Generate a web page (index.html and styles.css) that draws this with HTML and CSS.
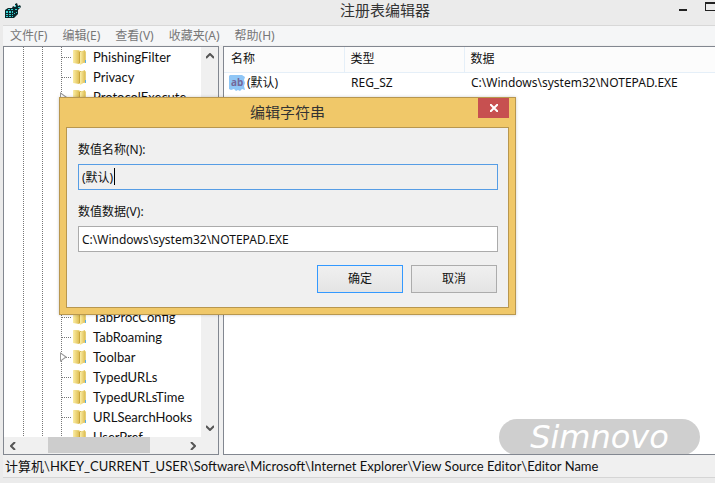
FILE: index.html
```html
<!DOCTYPE html>
<html lang="zh-CN">
<head>
<meta charset="UTF-8">
<title>注册表编辑器</title>
<link rel="stylesheet" href="styles.css">
</head>
<body>
<svg class="defs" aria-hidden="true">
  <defs>
    <linearGradient id="gold" x1="0" x2="1">
      <stop offset="0" stop-color="#fbeea6"/>
      <stop offset="1" stop-color="#dfbf55"/>
    </linearGradient>
    <symbol id="folder" viewBox="0 0 14 16">
      <path d="M1 1h5l1 1h5l1 1v11H1z" fill="#ecd987"/>
      <path d="M0 1l6 1v13l-6-1z" fill="url(#gold)"/>
      <path d="M6 3l2-1v11l-2 2z" fill="#c9a53c"/>
      <path d="M7 3l5-2v12l-5 3z" fill="url(#gold)"/>
      <path d="M12 2l1 1v11h-2l1-1z" fill="#e6cf78"/>
      <path d="M12 11h1v3h-1z" fill="#5aaee6"/>
    </symbol>
  </defs>
</svg>

<div class="window">
  <header class="titlebar">
    <svg class="app-icon" viewBox="0 0 16 16" aria-hidden="true">
      <path d="M0 7l3-2h4l1-2 2 1V1l2-1 1 3 2-1 1 2-2 2-1 1v4l-4 4H0z" fill="#08282b"/>
      <path d="M1 8h2v2H1zM4 8h2v2H4zM7 8h1v2H7zM1 11h2v1H1zM4 11h2v1H4zM7 11h1v1H7zM3 6h2v1H3zM6 6h2v1H6zM1 13h2v1H1zM4 13h2v1H4zM7 13h1v1H7zM10 2h1v2h-1zM13 4h2v1h-2zM10 6h2v1h-2zM9 10h1v1H9zM11 9h1v1h-1z" fill="#38d0d2"/>
    </svg>
    <h1>注册表编辑器</h1>
    <div class="window-controls">
      <button aria-label="最小化"><span class="min"></span></button>
      <button aria-label="最大化"><span class="max"></span></button>
    </div>
  </header>

  <nav class="menu">
    <button>文件(F)</button>
    <button>编辑(E)</button>
    <button>查看(V)</button>
    <button>收藏夹(A)</button>
    <button>帮助(H)</button>
  </nav>

  <main class="panes">
    <section class="tree-pane">
      <div class="tree-row">
        <ul class="tree">
          <li><svg><use href="#folder"/></svg>PhishingFilter</li>
          <li><svg><use href="#folder"/></svg>Privacy</li>
          <li class="closed"><svg><use href="#folder"/></svg>ProtocolExecute</li>
          <li><svg><use href="#folder"/></svg></li>
          <li><svg><use href="#folder"/></svg></li>
          <li><svg><use href="#folder"/></svg></li>
          <li><svg><use href="#folder"/></svg></li>
          <li><svg><use href="#folder"/></svg></li>
          <li><svg><use href="#folder"/></svg></li>
          <li><svg><use href="#folder"/></svg></li>
          <li><svg><use href="#folder"/></svg></li>
          <li><svg><use href="#folder"/></svg></li>
          <li><svg><use href="#folder"/></svg></li>
          <li><svg><use href="#folder"/></svg>TabProcConfig</li>
          <li><svg><use href="#folder"/></svg>TabRoaming</li>
          <li class="closed"><svg><use href="#folder"/></svg>Toolbar</li>
          <li><svg><use href="#folder"/></svg>TypedURLs</li>
          <li><svg><use href="#folder"/></svg>TypedURLsTime</li>
          <li><svg><use href="#folder"/></svg>URLSearchHooks</li>
          <li><svg><use href="#folder"/></svg>UserPref</li>
        </ul>
        <div class="vscroll">
          <button aria-label="向上"><svg viewBox="0 0 8 6"><path d="M0 5l4-4 4 4"/></svg></button>
          <button aria-label="向下"><svg viewBox="0 0 8 6"><path d="M0 1l4 4 4-4"/></svg></button>
        </div>
      </div>
      <div class="hscroll">
        <button aria-label="向左"><svg viewBox="0 0 6 8"><path d="M5 0L1 4l4 4"/></svg></button>
        <div class="track"><div class="thumb"></div></div>
        <button aria-label="向右"><svg viewBox="0 0 6 8"><path d="M1 0l4 4-4 4"/></svg></button>
      </div>
    </section>

    <section class="value-pane">
      <table class="values">
        <thead>
          <tr><th class="col-name">名称</th><th class="col-type">类型</th><th>数据</th></tr>
        </thead>
        <tbody>
          <tr>
            <td class="value-name">
              <svg viewBox="0 0 16 16" aria-hidden="true">
                <path d="M0 1l1-1h12l3 2-1 3 1 3-1 3 1 4-3-1-2 2-2-1-2 1-2-2-3 1-2-1z" fill="#8fc6f6"/>
                <text x="2" y="11">ab</text>
              </svg>(默认)
            </td>
            <td>REG_SZ</td>
            <td>C:\Windows\system32\NOTEPAD.EXE</td>
          </tr>
        </tbody>
      </table>
      <div class="watermark">Simnovo</div>
    </section>
  </main>

  <footer class="statusbar">计算机\HKEY_CURRENT_USER\Software\Microsoft\Internet Explorer\View Source Editor\Editor Name</footer>
</div>

<div class="dialog" role="dialog" aria-labelledby="dialog-title">
  <div class="dialog-title">
    <h2 id="dialog-title">编辑字符串</h2>
    <button class="close" aria-label="关闭"><svg viewBox="0 0 8 8"><path d="M0 0l8 8M8 0L0 8"/></svg></button>
  </div>
  <form class="dialog-body">
    <label for="value-name">数值名称(N):</label>
    <div class="field focused">
      <input id="value-name" type="text" value="(默认)" readonly>
      <span class="caret"></span>
    </div>
    <label for="value-data">数值数据(V):</label>
    <div class="field">
      <input id="value-data" type="text" value="C:\Windows\system32\NOTEPAD.EXE">
    </div>
    <div class="actions">
      <button type="button" class="default">确定</button>
      <button type="button">取消</button>
    </div>
  </form>
</div>
</body>
</html>
```

FILE: styles.css
```css
:root{
  --frame:#ebebeb;
  --face:#f0f0f0;
  --edge:#828790;
  --gold:#f0c869;
  --gold-dark:#b8974f;
}
*{box-sizing:border-box;}
body{margin:0;font:12px/20px "Noto Sans","Noto Sans CJK SC",sans-serif;color:#111;background:var(--frame);}
button,input{font:inherit;color:inherit;margin:0;padding:0;border:none;background:none;}
h1,h2{margin:0;font-size:15px;font-weight:normal;text-align:center;}
ul{margin:0;padding:0;list-style:none;}
.defs{position:absolute;width:0;height:0;}
.tree,.statusbar{font-family:Lato,"Noto Sans CJK SC",sans-serif;font-size:13px;}

.window{display:flex;flex-direction:column;height:100vh;overflow:hidden;padding:0 0 5px 3px;}
.titlebar{display:flex;align-items:flex-start;height:25px;flex:none;}
.app-icon{width:16px;height:16px;margin:3px 0 0 2px;}
.titlebar h1{flex:1;padding-left:70px;color:#333;}
.window-controls{display:flex;gap:18px;width:36px;flex:none;}
.window-controls button{display:flex;align-items:flex-end;height:11px;flex:none;}
.min{width:8px;height:2px;background:#222;}
.max{width:14px;height:9px;border:1px solid #222;border-top-width:2px;}

.menu{display:flex;gap:15px;flex:none;height:20px;padding-left:7px;background:#f5f6f7;border-top:1px solid #d8d8d8;color:#777;}
.menu button{line-height:18px;}

.panes{display:flex;gap:4px;flex:1;min-height:0;padding-top:1px;background:var(--face);}
.tree-pane{display:flex;flex-direction:column;width:216px;flex:none;background:#fff;border:1px solid var(--edge);}
.tree-row{display:flex;flex:1;min-height:0;}
.tree{position:relative;flex:1;overflow:hidden;background:
  repeating-linear-gradient(#777 0 1px,transparent 1px 2px) 19px 0/1px 100% no-repeat,
  repeating-linear-gradient(#777 0 1px,transparent 1px 2px) 38px 0/1px 100% no-repeat,
  repeating-linear-gradient(#777 0 1px,transparent 1px 2px) 57px 0/1px 100% no-repeat;}
.tree li{display:flex;align-items:center;gap:6px;height:20px;padding-left:69px;white-space:nowrap;background:repeating-linear-gradient(90deg,#777 0 1px,transparent 1px 2px) 58px 10px/10px 1px no-repeat;}
.tree svg{width:14px;height:16px;flex:none;}
.closed{position:relative;}
.closed::before{content:"";position:absolute;left:56px;top:5px;width:7px;height:10px;background:#999;clip-path:polygon(0 0,100% 50%,0 100%);}
.closed::after{content:"";position:absolute;left:57px;top:7px;width:4px;height:6px;background:#fff;clip-path:polygon(0 0,100% 50%,0 100%);}
.vscroll{display:flex;flex-direction:column;justify-content:space-between;width:17px;background:var(--face);}
.vscroll button,.hscroll button{display:flex;align-items:center;justify-content:center;width:17px;height:18px;flex:none;}
.vscroll svg{width:8px;height:6px;}
.hscroll svg{width:6px;height:8px;}
.vscroll path,.hscroll path{fill:none;stroke:#555;stroke-width:2;}
.hscroll{display:flex;align-items:center;height:17px;padding-right:17px;background:var(--face);}
.track{flex:1;height:100%;padding-left:27px;}
.thumb{width:102px;height:16px;background:#cdcdcd;}

.value-pane{position:relative;flex:1;background:#fff;border:1px solid var(--edge);border-right:none;overflow:hidden;}
.values{width:100%;border-collapse:collapse;table-layout:fixed;}
.values th{height:25px;padding:0 6px;font-weight:normal;text-align:left;background:#fcfcfc;border-bottom:1px solid #e5eff8;border-left:1px solid #e5eff8;}
.values th:first-child{padding-left:7px;border-left:none;}
.values td{height:20px;padding:0 7px;}
.col-name,.col-type{width:120px;}
.values .value-name{display:flex;align-items:center;gap:2px;padding-left:5px;}
.value-name svg{width:16px;height:16px;}
.value-name text{font:bold 10px "Noto Sans",sans-serif;fill:#75689a;}
.watermark{position:absolute;right:15px;bottom:-1px;width:201px;height:36px;border-radius:18px;background:#cfcfcf;color:#fff;font:italic 32px/36px "DejaVu Sans",sans-serif;text-align:center;}

.statusbar{flex:none;height:23px;padding-left:2px;line-height:22px;background:var(--face);border-bottom:1px solid #d5d5d5;white-space:nowrap;}

.dialog{position:absolute;left:59px;top:97px;width:457px;padding:0 6px 6px;background:var(--gold);border:1px solid var(--gold-dark);box-shadow:0 0 3px rgba(0,0,0,0.2);}
.dialog-title{display:flex;align-items:flex-start;height:29px;}
.dialog-title h2{flex:1;padding-left:31px;line-height:29px;color:#333;}
.close{display:flex;align-items:center;justify-content:center;width:31px;height:20px;background:#c75050;}
.close svg{width:8px;height:8px;}
.close path{stroke:#fff;stroke-width:2;}
.dialog-body{display:flex;flex-direction:column;padding:12px 10px 14px 11px;background:var(--face);border:1px solid var(--gold-dark);}
.dialog-body label{margin-bottom:4px;}
.field{display:flex;align-items:center;height:26px;margin-bottom:12px;padding:0 3px;position:relative;background:#fff;border:1px solid #ababab;}
.field input{flex:1;outline:none;height:22px;}
.focused{background:var(--face);border-color:#569de5;}
.caret{position:absolute;left:35px;top:3px;width:1px;height:17px;background:#000;}
.actions{display:flex;justify-content:flex-end;gap:8px;padding:1px 1px 0 0;}
.actions button{width:86px;height:28px;background:linear-gradient(#f0f0f0,#e4e4e4);border:1px solid #acacac;}
.actions .default{border-color:#3399ff;}
```
